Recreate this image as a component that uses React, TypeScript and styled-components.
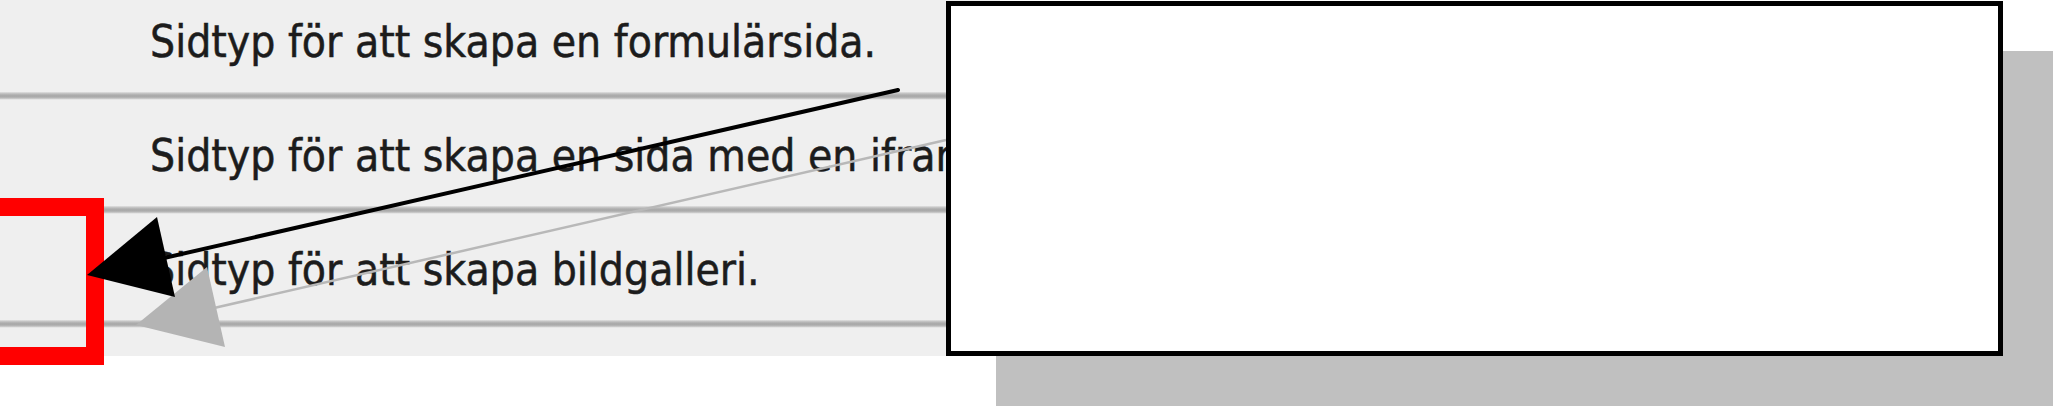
import React from 'react'
import styled, { createGlobalStyle } from 'styled-components'

const GlobalStyle = createGlobalStyle`
  html, body {
    margin: 0;
    padding: 0;
    background: #ffffff;
  }
`

const Stage = styled.div`
  position: relative;
  width: 2054px;
  height: 410px;
  overflow: hidden;
  background: #ffffff;
`

const ListPanel = styled.div`
  display: flex;
  flex-direction: column;
  width: 1000px;
  background: #efefef;
`

const Row = styled.div<{ $cut?: number }>`
  display: flex;
  align-items: center;
  height: 106px;
  margin-top: ${(p) => (p.$cut ? -p.$cut : 0)}px;
  padding-left: 150px;
  font-family: "DejaVu Sans Condensed", "DejaVu Sans", sans-serif;
  font-size: 44px;
  color: #1c1c1c;
  -webkit-text-stroke: 0.5px #1c1c1c;
  white-space: nowrap;
  overflow: hidden;
`

const RowText = styled.span`
  display: block;
  transform: translateY(2px);
`

const Separator = styled.div`
  height: 8px;
  background: linear-gradient(
    #e2e2e2 0%,
    #b9b9b9 25%,
    #a6a6a6 50%,
    #b9b9b9 75%,
    #f4f4f4 100%
  );
`

const Tail = styled.div`
  height: 28px;
`

const Marker = styled.div`
  position: absolute;
  left: -30px;
  top: 198px;
  width: 134px;
  height: 167px;
  box-sizing: border-box;
  border: 18px solid #ff0000;
`

const Callout = styled.div`
  position: absolute;
  left: 946px;
  top: 1px;
  width: 1057px;
  height: 355px;
  box-sizing: border-box;
  border: 5px solid #000000;
  background: #ffffff;
  box-shadow: 50px 50px 0 #c0c0c0;
`

const ArrowLayer = styled.svg`
  position: absolute;
  left: 0;
  top: 0;
  pointer-events: none;
`

const rows = [
  'Sidtyp för att skapa en formulärsida.',
  'Sidtyp för att skapa en sida med en iframe.',
  'Sidtyp för att skapa bildgalleri.',
]

const App = () => {
  return (
    <>
      <GlobalStyle />
      <Stage>
        <ListPanel>
          {rows.map((text, i) => (
            <React.Fragment key={text}>
              <Row $cut={i === 0 ? 14 : 0}>
                <RowText>{text}</RowText>
              </Row>
              <Separator />
            </React.Fragment>
          ))}
          <Tail />
        </ListPanel>
        <Marker />
        <ArrowLayer width={2054} height={410} viewBox="0 0 2054 410">
          {/* shadow of the pointer arrow */}
          <line x1={946} y1={140} x2={214} y2={308} stroke="#b8b8b8" strokeWidth={2.5} />
          <polygon points="136,325 207,267 225,347" fill="#b4b4b4" />
        </ArrowLayer>
        <Callout />
        <ArrowLayer width={2054} height={410} viewBox="0 0 2054 410">
          <line x1={898} y1={90} x2={164} y2={258} stroke="#000000" strokeWidth={4} strokeLinecap="round" />
          <polygon points="87,275 157,217 175,297" fill="#000000" />
        </ArrowLayer>
      </Stage>
    </>
  )
}

export default App
